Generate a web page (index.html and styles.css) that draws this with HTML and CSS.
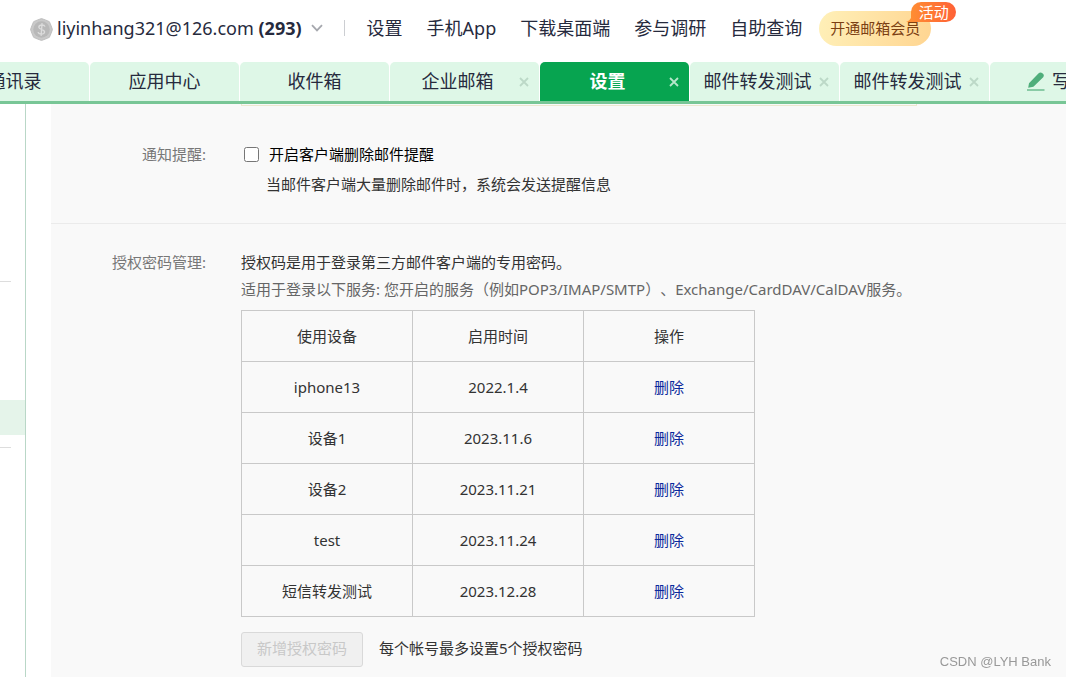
FILE: index.html
```html
<!DOCTYPE html>
<html lang="zh-CN">
<head>
<meta charset="utf-8">
<meta name="viewport" content="width=device-width, initial-scale=1">
<title>设置</title>
<link rel="stylesheet" href="styles.css">
</head>
<body>
<header class="topbar">
  <button class="account" type="button">
    <svg class="account-badge" viewBox="0 0 24 24" aria-hidden="true">
      <path d="M12 .6 16 2 20.2 3.8 22 8 23.4 12 22 16 20.2 20.2 16 22 12 23.4 8 22 3.8 20.2 2 16 .6 12 2 8 3.8 3.8 8 2Z" fill="#c9c9c9" stroke="#bdbdbd" stroke-width="1" stroke-linejoin="round"/>
      <circle cx="12" cy="12" r="8.6" fill="#b8b8b8"/>
      <path d="M15.6 9C15 6.8 9.4 6.6 9.2 9.6 9.2 12.4 15.2 11.4 15.2 14.6 14.8 17.6 9 17.4 8.4 14.8M12.6 5.4 11.6 18.6" fill="none" stroke="#dcdcdc" stroke-width="1.4"/>
    </svg>
    <span class="account-name">liyinhang321@126.com <b>(293)</b></span>
    <svg class="account-arrow" viewBox="0 0 12 8" aria-hidden="true"><path d="M1 1.2 6 6.4 11 1.2" fill="none" stroke="#a6a8ae" stroke-width="1.8"/></svg>
  </button>
  <span class="divider"></span>
  <nav class="links">
    <a href="#">设置</a>
    <a href="#">手机App</a>
    <a href="#">下载桌面端</a>
    <a href="#">参与调研</a>
    <a href="#">自助查询</a>
  </nav>
  <a class="vip" href="#">开通邮箱会员<span class="vip-tag">活动<svg class="vip-tail" viewBox="0 0 6 6" aria-hidden="true"><path d="M6 0V6H0Q4 5 6 0Z" fill="#ff8d33"/></svg></span></a>
</header>

<nav class="tabs">
  <div class="tab"><a href="#">通讯录</a></div>
  <div class="tab"><a href="#">应用中心</a></div>
  <div class="tab"><a href="#">收件箱</a></div>
  <div class="tab closable"><a href="#">企业邮箱</a><button class="close" type="button" aria-label="关闭"><svg viewBox="0 0 10 10"><path d="M1 1 9 9M9 1 1 9"/></svg></button></div>
  <div class="tab closable active"><a href="#">设置</a><button class="close" type="button" aria-label="关闭"><svg viewBox="0 0 10 10"><path d="M1 1 9 9M9 1 1 9"/></svg></button></div>
  <div class="tab closable"><a href="#">邮件转发测试</a><button class="close" type="button" aria-label="关闭"><svg viewBox="0 0 10 10"><path d="M1 1 9 9M9 1 1 9"/></svg></button></div>
  <div class="tab closable"><a href="#">邮件转发测试</a><button class="close" type="button" aria-label="关闭"><svg viewBox="0 0 10 10"><path d="M1 1 9 9M9 1 1 9"/></svg></button></div>
  <div class="tab closable"><a class="compose" href="#"><svg class="pen" viewBox="0 0 18 19" aria-hidden="true"><path d="M1.2 15.8 2 11.2 11.4 1.4Q13.4 -.4 15.4 1.2 17.8 3 16.2 5.2L6.4 14.8Z" fill="#4fae7b"/><path d="M0 18H17.5" stroke="#4fae7b" stroke-width="1.2"/></svg>写信</a></div>
</nav>

<div class="body">
  <aside class="sidebar">
    <hr class="side-line">
    <div class="side-current"></div>
    <hr class="side-line">
  </aside>
  <main class="settings">
    <section class="row row-notice">
      <div class="tip-box"></div>
      <h2 class="label">通知提醒:</h2>
      <div class="field">
        <div class="check">
          <input type="checkbox" id="remind">
          <label for="remind">开启客户端删除邮件提醒</label>
        </div>
        <p class="check-note">当邮件客户端大量删除邮件时，系统会发送提醒信息</p>
      </div>
    </section>
    <section class="row row-auth">
      <h2 class="label">授权密码管理:</h2>
      <div class="field">
        <p class="lead">授权码是用于登录第三方邮件客户端的专用密码。</p>
        <p class="sub">适用于登录以下服务: 您开启的服务（例如POP3/IMAP/SMTP）、Exchange/CardDAV/CalDAV服务。</p>
        <table class="devices">
          <thead><tr><th>使用设备</th><th>启用时间</th><th>操作</th></tr></thead>
          <tbody>
            <tr><td>iphone13</td><td>2022.1.4</td><td><a href="#">删除</a></td></tr>
            <tr><td>设备1</td><td>2023.11.6</td><td><a href="#">删除</a></td></tr>
            <tr><td>设备2</td><td>2023.11.21</td><td><a href="#">删除</a></td></tr>
            <tr><td>test</td><td>2023.11.24</td><td><a href="#">删除</a></td></tr>
            <tr><td>短信转发测试</td><td>2023.12.28</td><td><a href="#">删除</a></td></tr>
          </tbody>
        </table>
        <div class="add">
          <button class="add-button" type="button" disabled>新增授权密码</button>
          <span>每个帐号最多设置5个授权密码</span>
        </div>
      </div>
    </section>
  </main>
</div>
<div class="watermark">CSDN @LYH Bank</div>
</body>
</html>
```
FILE: styles.css
```css
* { box-sizing: border-box; }

body {
  margin: 0;
  min-height: 100vh;
  display: flex;
  flex-direction: column;
  overflow: hidden;
  background: #fff;
  color: #333;
  font: 15px/24px "Noto Sans", "Noto Sans CJK SC", sans-serif;
  text-spacing-trim: space-all;
}

a { color: inherit; text-decoration: none; }
button { font: inherit; color: inherit; }
h2, p { margin: 0; font-size: 15px; font-weight: 400; }

.topbar {
  display: flex;
  align-items: center;
  height: 62px;
  padding: 0 30px 6px;
  color: #262a3d;
  font-size: 18px;
  white-space: nowrap;
}

.account {
  display: flex;
  align-items: center;
  padding: 0;
  border: 0;
  background: none;
}
.account-badge { width: 23px; height: 23px; margin: 2px 4px 0 0; }
.account-arrow { width: 12px; height: 8px; margin-left: 9px; }
.divider { width: 1px; height: 16px; margin: 0 22px 0 21px; background: #ccced2; }
.links { display: flex; gap: 24px; }

.vip {
  position: relative;
  height: 35px;
  margin-left: 17px;
  padding: 0 11px;
  border-radius: 18px;
  background: linear-gradient(100deg, #fff0b8, #ffd591);
  color: #7c3f12;
  font-size: 15px;
  line-height: 35px;
}
.vip-tag {
  position: absolute;
  top: -9px;
  right: -25px;
  width: 45px;
  height: 20px;
  border-radius: 10px 10px 10px 0;
  background: linear-gradient(90deg, #ff8d33, #ff6136);
  color: #fff;
  line-height: 20px;
  text-align: center;
}
.vip-tail { position: absolute; left: -5px; bottom: 0; width: 6px; height: 6px; }

.tabs {
  display: flex;
  gap: 1px;
  margin-left: -60px;
  border-bottom: 3px solid #78c696;
  overflow: hidden;
  color: #262a3d;
  font-size: 18px;
}
.tab {
  position: relative;
  flex: none;
  width: 149px;
  height: 39px;
  border-radius: 5px 5px 0 0;
  background: #def7e7;
  line-height: 39px;
  text-align: center;
  white-space: nowrap;
}
.closable { padding-right: 14px; }
.active { background: #07a450; color: #fff; font-weight: 700; }
.close {
  position: absolute;
  top: 15px;
  right: 10px;
  width: 10px;
  height: 10px;
  padding: 0;
  border: 0;
  background: none;
}
.close svg { display: block; stroke: #bcd8c7; stroke-width: 1.8; }
.active .close svg { stroke: #b5e6ca; }
.compose { display: flex; justify-content: center; align-items: center; gap: 7px; }
.pen { width: 18px; height: 19px; }

.body { display: flex; flex: 1; }
.sidebar {
  flex: none;
  width: 26px;
  padding-top: 177px;
  border-right: 1px solid #b9d7c7;
}
.side-line { width: 11px; height: 1px; margin: 0; border: 0; background: #ddd; }
.side-current { height: 35px; margin: 118px 0 12px; background: #e5f4ea; }

.settings { flex: 1; min-width: 0; margin-left: 25px; background: #f9f9f9; }
.row {
  display: grid;
  grid-template-columns: 155px 1fr;
  column-gap: 35px;
}
.row-notice { padding-bottom: 27px; border-bottom: 1px solid #ebebeb; }
.row-auth { padding: 26px 0 10px; }
.tip-box {
  grid-column: 2;
  height: 2px;
  max-width: 676px;
  margin-bottom: 36px;
  border: 1px solid #ece8cf;
  border-top: 0;
}
.label { grid-column: 1; color: #777; text-align: right; }
.check { display: flex; align-items: center; gap: 10px; color: #000; }
.check input { width: 15px; height: 15px; margin: 0 0 0 3px; }
.check-note { padding: 6px 0 0 25px; }
.sub { padding: 3px 0 9px; color: #666; white-space: nowrap; }

.devices {
  width: 514px;
  border-collapse: collapse;
  table-layout: fixed;
}
.devices th, .devices td {
  height: 51px;
  padding: 0;
  border: 1px solid #c9c9c9;
  font-weight: 400;
  text-align: center;
}
.devices a { color: #0b2a9c; }

.add { display: flex; align-items: center; gap: 16px; margin-top: 15px; }
.add-button {
  height: 35px;
  padding: 0 15px 3px;
  border: 1px solid #d9d9d9;
  border-radius: 3px;
  background: #f0f0f0;
  color: #c8c8c8;
}
.add span { padding-bottom: 3px; }

.watermark {
  position: fixed;
  right: 15px;
  bottom: 5px;
  color: #999;
  font: 13px/20px "Liberation Sans", sans-serif;
}
```
